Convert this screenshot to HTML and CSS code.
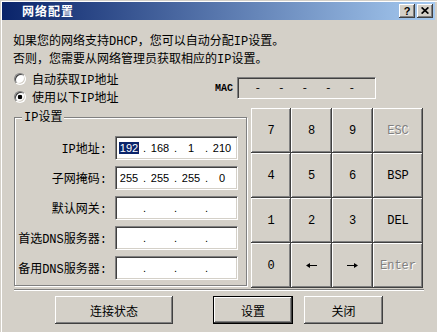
FILE: index.html
```html
<!DOCTYPE html>
<html lang="zh">
<head>
<meta charset="utf-8">
<title>网络配置</title>
<link rel="stylesheet" href="styles.css">
</head>
<body>
<div class="window">
  <div class="titlebar">
    <span class="title">网络配置</span>
    <div class="tbtns">
      <span class="tbtn help">?</span>
      <span class="tbtn close"><svg width="8" height="7" viewBox="0 0 8 7"><path d="M0.6 0.4 L7.4 6.6 M7.4 0.4 L0.6 6.6" stroke="#000" stroke-width="1.7" fill="none"/></svg></span>
    </div>
  </div>
  <div class="content">
    <p class="intro">如果您的网络支持<span class="a">DHCP</span>，您可以自动分配<span class="a">IP</span>设置。<br>否则，您需要从网络管理员获取相应的<span class="a">IP</span>设置。</p>
    <div class="options">
      <div class="radios">
        <div class="radio"><span class="rdot"></span><span>自动获取<span class="a">IP</span>地址</span></div>
        <div class="radio"><span class="rdot on"></span><span>使用以下<span class="a">IP</span>地址</span></div>
      </div>
      <div class="mac">
        <span class="mac-label">MAC</span>
        <div class="mac-box"><span>-</span><span>-</span><span>-</span><span>-</span><span>-</span></div>
      </div>
    </div>
    <div class="main">
      <div class="group">
        <span class="group-title"><span class="a">IP</span>设置</span>
        <div class="fields">
          <span class="flabel"><span class="a">IP</span>地址<span class="a">:</span></span>
          <div class="ipbox"><span class="seg"><span class="sel">192</span></span><span class="pt">.</span><span class="seg">168</span><span class="pt">.</span><span class="seg">1</span><span class="pt">.</span><span class="seg">210</span></div>
          <span class="flabel">子网掩码<span class="a">:</span></span>
          <div class="ipbox"><span class="seg">255</span><span class="pt">.</span><span class="seg">255</span><span class="pt">.</span><span class="seg">255</span><span class="pt">.</span><span class="seg">0</span></div>
          <span class="flabel">默认网关<span class="a">:</span></span>
          <div class="ipbox"><span class="seg"></span><span class="pt">.</span><span class="seg"></span><span class="pt">.</span><span class="seg"></span><span class="pt">.</span><span class="seg"></span></div>
          <span class="flabel">首选<span class="a">DNS</span>服务器<span class="a">:</span></span>
          <div class="ipbox"><span class="seg"></span><span class="pt">.</span><span class="seg"></span><span class="pt">.</span><span class="seg"></span><span class="pt">.</span><span class="seg"></span></div>
          <span class="flabel">备用<span class="a">DNS</span>服务器<span class="a">:</span></span>
          <div class="ipbox"><span class="seg"></span><span class="pt">.</span><span class="seg"></span><span class="pt">.</span><span class="seg"></span><span class="pt">.</span><span class="seg"></span></div>
        </div>
      </div>
      <div class="keypad">
        <button class="key">7</button>
        <button class="key">8</button>
        <button class="key">9</button>
        <button class="key off">ESC</button>
        <button class="key">4</button>
        <button class="key">5</button>
        <button class="key">6</button>
        <button class="key">BSP</button>
        <button class="key">1</button>
        <button class="key">2</button>
        <button class="key">3</button>
        <button class="key">DEL</button>
        <button class="key">0</button>
        <button class="key" aria-label="左"><svg class="arrow" width="11" height="7" viewBox="0 0 11 7"><path d="M3 3.5 H11" stroke="#000" stroke-width="1"/><path d="M0 3.5 L4 1 L4 6 Z" fill="#000"/></svg></button>
        <button class="key" aria-label="右"><svg class="arrow" width="11" height="7" viewBox="0 0 11 7"><path d="M0 3.5 H8" stroke="#000" stroke-width="1"/><path d="M11 3.5 L7 1 L7 6 Z" fill="#000"/></svg></button>
        <button class="key off">Enter</button>
      </div>
    </div>
    <div class="sep"></div>
    <div class="actions">
      <button class="btn btn-status">连接状态</button>
      <button class="btn btn-set">设置</button>
      <button class="btn btn-close">关闭</button>
    </div>
  </div>
</div>
</body>
</html>
```

FILE: styles.css
```css
html, body {
  margin: 0;
  padding: 0;
  background: #d4d0c8;
}

body {
  font-family: "Noto Sans CJK SC", sans-serif;
  font-size: 12px;
  color: #000;
}

.a {
  font-family: "Liberation Mono", monospace;
  font-size: 12px;
}

.window {
  width: 437px;
  height: 332px;
  box-sizing: border-box;
  background: #d4d0c8;
  border-top: 1px solid #d4d0c8;
  border-left: 1px solid #d4d0c8;
  box-shadow: inset 1px 1px 0 #fff;
  padding: 1px 2px 0 1px;
  overflow: hidden;
}

.titlebar {
  height: 18px;
  display: flex;
  align-items: center;
  justify-content: space-between;
  background: linear-gradient(to right, #0a246a, #a6caf0);
  padding: 0 2px 0 20px;
}

.title {
  color: #fff;
  font-weight: bold;
  letter-spacing: 1px;
  line-height: 18px;
}

.tbtns {
  display: flex;
  gap: 2px;
}

.tbtn {
  width: 16px;
  height: 14px;
  box-sizing: border-box;
  background: #d4d0c8;
  box-shadow: inset -1px -1px 0 #404040, inset 1px 1px 0 #fff, inset -2px -2px 0 #808080;
  display: flex;
  align-items: center;
  justify-content: center;
}

.help {
  font-family: "Liberation Sans", sans-serif;
  font-weight: bold;
  font-size: 11px;
  line-height: 14px;
  padding-bottom: 1px;
}

.close svg {
  display: block;
  margin-top: -1px;
}

.content {
  padding: 12px 0 0 12px;
}

.intro {
  margin: 0 0 0 -1px;
  line-height: 15px;
}

.options {
  display: flex;
  align-items: center;
  margin-top: 2px;
}

.radios {
  width: 201px;
}

.radio {
  height: 18px;
  display: flex;
  align-items: center;
  gap: 6px;
}

.rdot {
  width: 12px;
  height: 12px;
  box-sizing: border-box;
  border-radius: 50%;
  border: 1px solid;
  border-color: #808080 #fff #fff #808080;
  box-shadow: inset 1px 1px 0 #404040, inset -1px -1px 0 #d4d0c8;
  background: #fff;
}

.rdot.on {
  background: radial-gradient(circle, #000 0 2px, #fff 2.6px);
}

.mac {
  display: flex;
  align-items: center;
  gap: 4px;
}

.mac-label {
  font-family: "Liberation Mono", monospace;
  font-size: 10px;
  font-weight: bold;
}

.mac-box {
  width: 139px;
  height: 22px;
  box-sizing: border-box;
  border: 1px solid;
  border-color: #808080 #fff #fff #808080;
  box-shadow: inset 1px 1px 0 #404040, inset -1px -1px 0 #d4d0c8;
  display: flex;
  align-items: center;
  padding-left: 8px;
  font-family: "Liberation Mono", monospace;
  font-size: 11px;
}

.mac-box span {
  width: 23.5px;
  text-align: center;
}

.main {
  display: flex;
  align-items: flex-start;
  margin-top: 2px;
}

.group {
  width: 233px;
  height: 169px;
  box-sizing: border-box;
  margin-top: 9px;
  border: 1px solid #808080;
  box-shadow: inset 1px 1px 0 #fff, 1px 1px 0 #fff;
  display: flex;
  flex-direction: column;
  align-items: flex-start;
}

.group-title {
  margin: -10px 0 0 7px;
  padding: 0 2px;
  line-height: 15px;
  background: #d4d0c8;
}

.fields {
  margin-top: 10px;
  display: grid;
  grid-template-columns: 92px 123px;
  column-gap: 8px;
  row-gap: 6px;
}

.flabel {
  justify-self: end;
  align-self: center;
  white-space: nowrap;
}

.ipbox {
  height: 24px;
  box-sizing: border-box;
  background: #fff;
  border: 1px solid;
  border-color: #808080 #fff #fff #808080;
  box-shadow: inset 1px 1px 0 #404040, inset -1px -1px 0 #d4d0c8;
  display: flex;
  align-items: center;
  padding-left: 1px;
  font-family: "Liberation Sans", sans-serif;
  font-size: 11px;
  line-height: 14px;
}

.seg {
  width: 24px;
  text-align: center;
}

.pt {
  width: 7px;
  text-align: center;
}

.sel {
  background: #0a246a;
  color: #fff;
  padding: 0 1px;
}

.keypad {
  margin-left: 4px;
  display: grid;
  grid-template-columns: 40px 41px 41px 50px;
  grid-template-rows: repeat(4, 45px);
}

.key,
.btn {
  margin: 0;
  padding: 0;
  border: none;
  background: #d4d0c8;
  color: #000;
  box-shadow: inset -1px -1px 0 #404040, inset 1px 1px 0 #fff, inset -2px -2px 0 #808080;
}

.key {
  font-family: "Liberation Mono", monospace;
  font-size: 12px;
  display: flex;
  align-items: center;
  justify-content: center;
}

.key .arrow {
  display: block;
}

.key.off {
  color: #808080;
  text-shadow: 1px 1px 0 #fff;
}

.sep {
  width: 410px;
  margin-top: 1px;
  border-top: 1px solid #808080;
  border-bottom: 1px solid #fff;
}

.actions {
  display: flex;
  margin-top: 5px;
}

.btn {
  height: 28px;
  box-sizing: border-box;
  font-family: "Noto Sans CJK SC", sans-serif;
  font-size: 12px;
}

.btn-status {
  width: 118px;
  margin-left: 41px;
}

.btn-set {
  width: 80px;
  margin-left: 40px;
  border: 1px solid #000;
}

.btn-close {
  width: 79px;
  margin-left: 11px;
}
```
